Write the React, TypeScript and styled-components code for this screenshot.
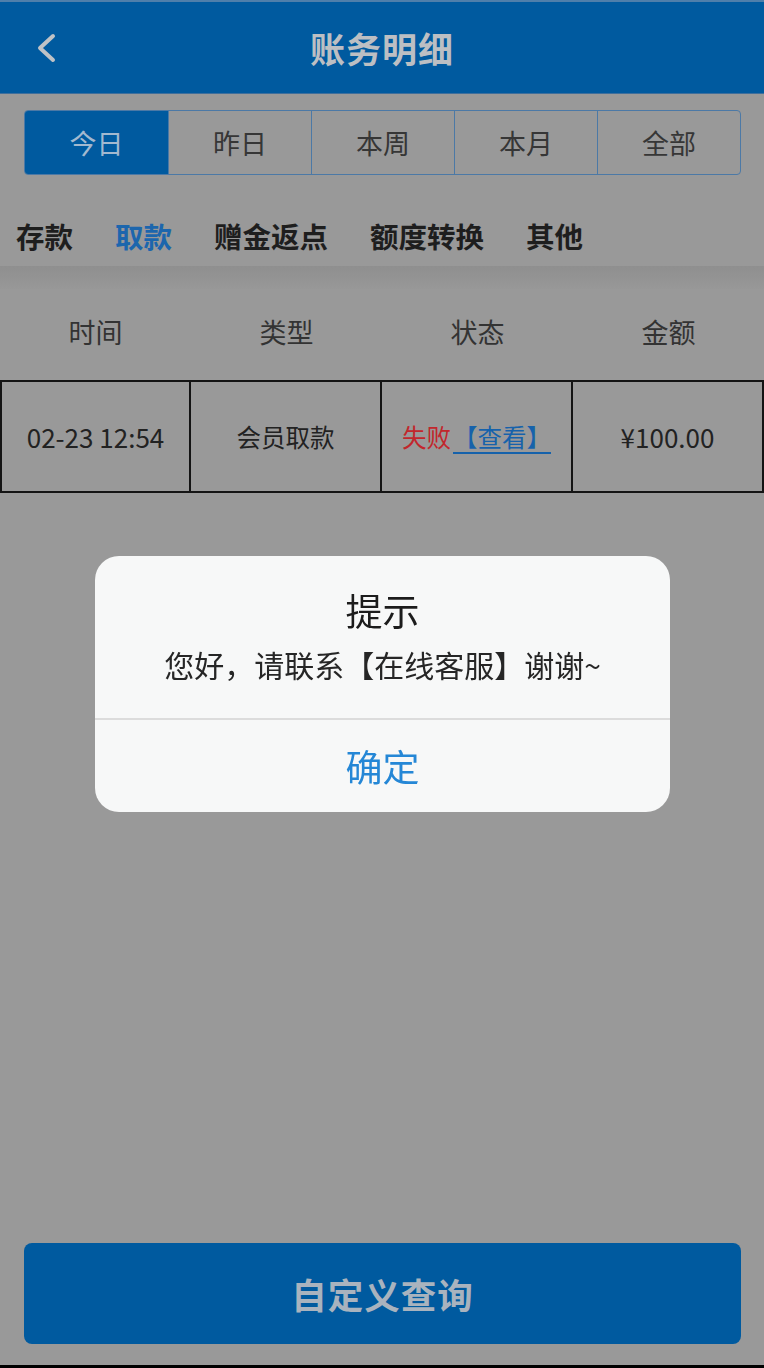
import styled, { createGlobalStyle } from 'styled-components';

const GlobalStyle = createGlobalStyle`
  html, body {
    margin: 0;
    padding: 0;
    background: #999999;
  }
  body {
    font-family: "Noto Sans CJK SC", "Noto Sans", sans-serif;
  }
  * {
    box-sizing: border-box;
  }
`;

const Page = styled.div`
  min-height: 100vh;
  display: flex;
  flex-direction: column;
  background: #999999;
`;

const Header = styled.header`
  height: 94px;
  display: grid;
  grid-template-columns: 90px 1fr 90px;
  align-items: center;
  background: #005a9f;
  border-top: 2px solid #4f7fab;
  border-bottom: 1px solid #3f6f9c;
`;

const BackButton = styled.div`
  padding-left: 34px;
  display: flex;
  align-items: center;
`;

const Title = styled.h1`
  margin: 0;
  text-align: center;
  font-size: 35px;
  font-weight: 700;
  color: #bcbfc3;
  letter-spacing: 1px;
`;

const TabBar = styled.div`
  margin: 16px 23px 0 24px;
  height: 65px;
  display: grid;
  grid-template-columns: repeat(5, 1fr);
  border: 1px solid #4c79a6;
  border-radius: 4px;
  overflow: hidden;
`;

const Tab = styled.div<{ $active?: boolean }>`
  display: flex;
  align-items: center;
  justify-content: center;
  font-size: 27px;
  color: ${(p) => (p.$active ? '#a3b9cf' : '#363636')};
  background: ${(p) => (p.$active ? '#005a9f' : 'transparent')};
  & + & {
    border-left: 1px solid #4c79a6;
  }
`;

const CategoryRow = styled.div`
  display: flex;
  gap: 42px;
  padding: 41px 16px 11px;
`;

const Category = styled.div<{ $active?: boolean }>`
  font-size: 28.5px;
  line-height: 39px;
  font-weight: 700;
  color: ${(p) => (p.$active ? '#1c66ad' : '#1e1e1e')};
`;

const ShadowBand = styled.div`
  height: 23px;
  background: linear-gradient(#8f8f8f, #949494 60%, #989898);
`;

const Columns = styled.div`
  display: grid;
  grid-template-columns: repeat(4, 1fr);
`;

const HeadCell = styled.div`
  height: 91px;
  padding-bottom: 6px;
  display: flex;
  align-items: center;
  justify-content: center;
  font-size: 27px;
  color: #333;
`;

const Row = styled(Columns)`
  border-top: 2px solid #141414;
  border-bottom: 2px solid #141414;
`;

const Cell = styled.div<{ $num?: boolean }>`
  height: 109px;
  display: flex;
  align-items: center;
  justify-content: center;
  font-size: ${(p) => (p.$num ? '26px' : '24.5px')};
  color: #222;
  border-right: 2px solid #141414;
  &:first-child {
    border-left: 2px solid #141414;
  }
`;

const Failed = styled.span`
  color: #c2262c;
`;

const ViewLink = styled.a`
  color: #1662ab;
  text-decoration: underline;
  text-underline-offset: 5px;
  margin-left: 2px;
`;

const Footer = styled.div`
  margin-top: auto;
  padding: 0 23px 21px 24px;
`;

const QueryButton = styled.button`
  width: 100%;
  height: 101px;
  border: none;
  border-radius: 8px;
  background: #005a9f;
  color: #a9b3be;
  font-family: inherit;
  font-size: 35.5px;
  font-weight: 700;
  letter-spacing: 1px;
`;

const BottomEdge = styled.div`
  height: 3px;
  background: #000;
`;

const Mask = styled.div`
  position: fixed;
  inset: 0;
  display: flex;
  align-items: center;
  justify-content: center;
  padding-left: 1px;
`;

const Dialog = styled.div`
  width: 575px;
  background: #f7f8f8;
  border-radius: 24px;
  overflow: hidden;
  text-align: center;
`;

const DialogBody = styled.div`
  padding: 30px 20px 34px;
`;

const DialogTitle = styled.div`
  font-size: 37px;
  line-height: 48px;
  color: #1c1c1c;
`;

const DialogText = styled.div`
  margin-top: 10px;
  font-size: 30px;
  line-height: 40px;
  color: #262626;
`;

const DialogButton = styled.div`
  height: 94px;
  display: flex;
  align-items: center;
  justify-content: center;
  border-top: 2px solid #dcdcdc;
  font-size: 37px;
  color: #2587d6;
`;

const ranges = ['今日', '昨日', '本周', '本月', '全部'];
const categories = ['存款', '取款', '赠金返点', '额度转换', '其他'];
const heads = ['时间', '类型', '状态', '金额'];

export default function App() {
  return (
    <>
      <GlobalStyle />
      <Page>
        <Header>
          <BackButton>
            <svg width="24" height="32" viewBox="0 0 24 32">
              <path d="M19 4 L6 16 L19 28" fill="none" stroke="#bfc2c6" strokeWidth="4" strokeLinecap="round" strokeLinejoin="round" />
            </svg>
          </BackButton>
          <Title>账务明细</Title>
          <div />
        </Header>

        <TabBar>
          {ranges.map((r, i) => (
            <Tab key={r} $active={i === 0}>
              {r}
            </Tab>
          ))}
        </TabBar>

        <CategoryRow>
          {categories.map((c, i) => (
            <Category key={c} $active={i === 1}>
              {c}
            </Category>
          ))}
        </CategoryRow>

        <ShadowBand />

        <Columns>
          {heads.map((h) => (
            <HeadCell key={h}>{h}</HeadCell>
          ))}
        </Columns>

        <Row>
          <Cell $num>02-23 12:54</Cell>
          <Cell>会员取款</Cell>
          <Cell>
            <Failed>失败</Failed>
            <ViewLink>【查看】</ViewLink>
          </Cell>
          <Cell $num>¥100.00</Cell>
        </Row>

        <Footer>
          <QueryButton>自定义查询</QueryButton>
        </Footer>
        <BottomEdge />
      </Page>

      <Mask>
        <Dialog>
          <DialogBody>
            <DialogTitle>提示</DialogTitle>
            <DialogText>您好，请联系【在线客服】谢谢~</DialogText>
          </DialogBody>
          <DialogButton>确定</DialogButton>
        </Dialog>
      </Mask>
    </>
  );
}
